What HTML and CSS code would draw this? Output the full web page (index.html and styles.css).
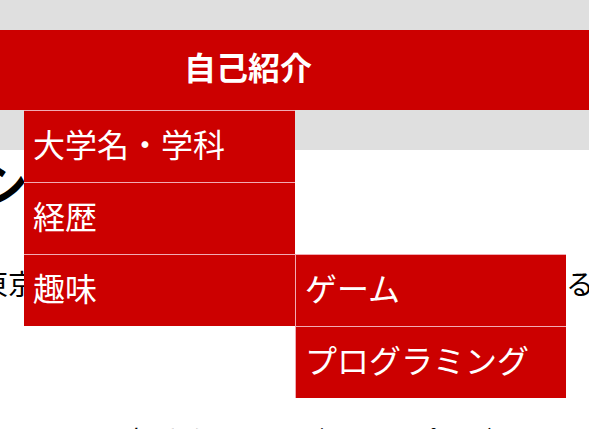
FILE: index.html
```html
<!DOCTYPE html>
<html lang="ja">
<head>
<meta charset="utf-8">
<title>自己紹介</title>
<link rel="stylesheet" href="styles.css">
</head>
<body>
<header class="site-header">
  <nav class="global-nav">
    <ul class="menu">
      <li class="menu-item">自己紹介
        <ul class="dropdown">
          <li class="dropdown-item">大学名・学科</li>
          <li class="dropdown-item">経歴</li>
          <li class="dropdown-item has-sub">趣味
            <ul class="submenu">
              <li class="submenu-item">ゲーム</li>
              <li class="submenu-item">プログラミング</li>
            </ul>
          </li>
        </ul>
      </li>
    </ul>
  </nav>
</header>
<main class="content">
  <h1 class="page-title">シンプル</h1>
  <p class="intro">東京都出身で、現在は情報工学科に通学している</p>
  <p class="detail">好きなことはゲームとプログラミングです。よろしくお願いします。</p>
</main>
</body>
</html>
```

FILE: styles.css
```css
html, body {
  margin: 0;
  padding: 0;
}

body {
  width: 589px;
  height: 429px;
  overflow: hidden;
  background: #ffffff;
  color: #000000;
  font-family: "Noto Sans CJK JP", "Noto Sans", sans-serif;
}

.site-header {
  position: relative;
  z-index: 10;
  background: #dfdfdf;
  padding: 30px 0 40px;
}

.global-nav {
  background: #cc0000;
  height: 80px;
}

.menu {
  list-style: none;
  margin: 0;
  padding: 0 0 0 24px;
  display: flex;
}

.menu-item {
  position: relative;
  width: 448px;
  height: 80px;
  line-height: 72px;
  text-align: center;
  color: #ffffff;
  font-size: 32px;
  font-weight: bold;
}

.dropdown,
.submenu {
  list-style: none;
  margin: 0;
  padding: 0;
  position: absolute;
}

.dropdown {
  top: 100%;
  left: 0;
  width: 271px;
}

.dropdown-item,
.submenu-item {
  height: 71px;
  line-height: 64px;
  border-top: 1px solid #f1aab3;
  background: #cc0000;
  color: #ffffff;
  font-size: 32px;
  font-weight: normal;
  text-align: left;
  padding-left: 9px;
  white-space: nowrap;
}

.has-sub {
  position: relative;
}

.submenu {
  top: -1px;
  left: 100%;
  width: 271px;
}

.submenu-item {
  border-left: 1px solid #f1aab3;
}

.content {
  margin-left: -20px;
  white-space: nowrap;
}

.page-title {
  margin: 0;
  font-size: 48px;
  line-height: 64px;
  font-weight: bold;
}

.intro {
  margin: 49px 0 0;
  font-size: 28px;
  line-height: 40px;
}

.detail {
  margin: 117px 0 0 150px;
  font-size: 28px;
  line-height: 40px;
}
```
